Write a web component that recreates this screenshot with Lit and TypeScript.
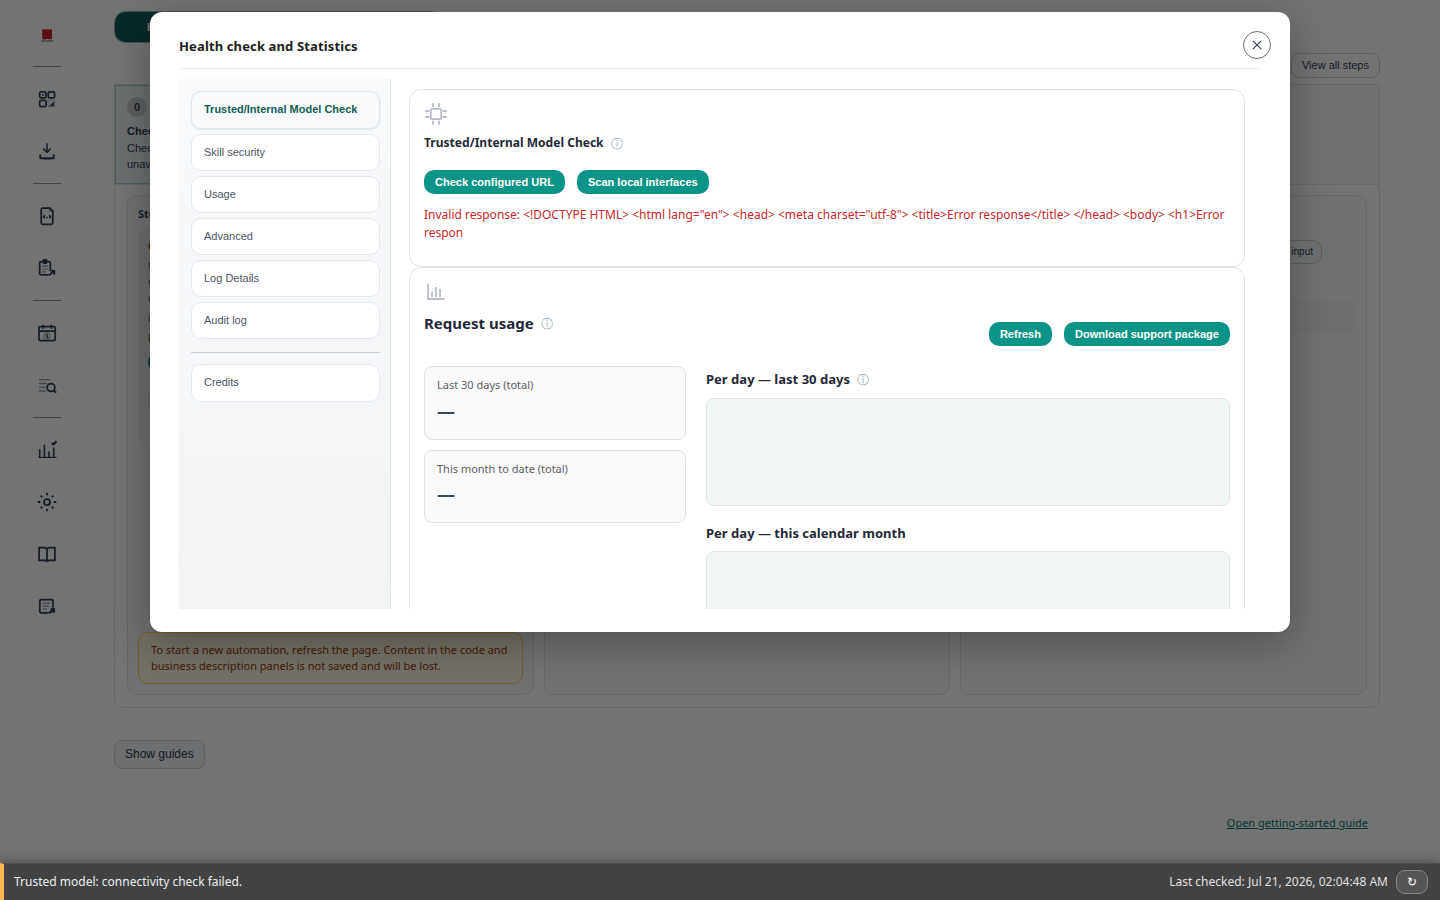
import { LitElement, html, css, svg } from "lit";
import { customElement } from "lit/decorators.js";
import { classMap } from "lit/directives/class-map.js";

const ico = (body: unknown) => html`<svg class="ico" viewBox="0 0 24 24" width="24" height="24">${body}</svg>`;

const icons = {
  logo: svg`<path d="M6 19h12" stroke="#a3a8ae" stroke-width="1.600"/><path d="M7.200 7.400h9.800v9.600H7.200z" fill="#c8242a" stroke="none"/><path d="M8.200 17.900h2.200m3.200 0h2.200" stroke="#6f757c" stroke-width="1"/>`,
  grid: svg`<rect x="4.700" y="4.800" width="6.300" height="6" rx="1.300"/><rect x="13.300" y="4.800" width="6.300" height="6" rx="1.300"/><rect x="4.700" y="13.300" width="6.300" height="6.200" rx="1.300"/><path d="M7.900 7v1.800" stroke-width="1.800"/><path d="M13 19.600V13.200h6.600v6.400z" opacity=".3" stroke-width="1"/><path d="M19 14.600v4.600h-5z" fill="currentColor" stroke="none"/>`,
  download: svg`<path d="M12 4.200v9.200M8.200 9.600l3.800 3.900 3.800-3.900" stroke-width="1.500"/><path d="M5.300 15.600v3.600h13.400v-3.600" stroke-width="1.900"/><path d="M9 20.600h6" opacity=".5" stroke-width="1"/>`,
  code: svg`<path d="M7.300 4h7.400l3.100 3v11.800a1.600 1.600 0 0 1-1.600 1.600H7.800a1.600 1.600 0 0 1-1.600-1.600V5.600A1.500 1.500 0 0 1 7.300 4z"/><path d="M14.400 4v3.200h3.200" opacity=".5" stroke-width="1.200"/><path d="M9.800 11.200 8.400 12.700l1.400 1.400M14.200 11.200l1.400 1.500-1.400 1.400M11.200 13.500h1.600" stroke-width="1.600"/>`,
  clip: svg`<path d="M13.500 18.900H6.200a1.500 1.500 0 0 1-1.500-1.500V7a1.500 1.500 0 0 1 1.500-1.500h7.600A1.500 1.500 0 0 1 15.300 7v8"/><circle cx="9.900" cy="5.400" r="1.700" stroke-width="2"/><path d="M7 10.200h6M7 13h6M7 15.800h3.800" opacity=".55" stroke-width="1.200"/><path d="M14 19.400l5-4.600M15.800 14.800h3.500v4" stroke-width="1.900"/>`,
  calendar: svg`<rect x="4" y="5.500" width="16.200" height="14.200" rx="1.400"/><path d="M4 10h16.200M7.900 3.700v4M16.300 3.700v4"/><circle cx="12" cy="14.800" r="3" opacity=".4" stroke-width="1.200"/><path d="M12 12.900v2.400l1.300 1.600" stroke-width="1.300"/>`,
  search: svg`<path d="M4 6.600h11.300M4 10.500h8M4 14.300h6.500M4 18h7.400" opacity=".5" stroke-width="1.300"/><circle cx="16" cy="14.500" r="3.900"/><path d="M18.800 17.300l2.300 2.300" stroke-width="2"/>`,
  stats: svg`<path d="M3.400 19.400h18" stroke-width="1.200"/><path d="M4.700 19V11M9.400 19V6.800M14 19v-5.600M18.700 19V9.400" stroke-width="1.600"/><path d="M16.700 5l1.800 1.400 3-3.200" stroke-width="2.200"/>`,
  gear: svg`<circle cx="12" cy="12" r="3"/><path d="M12 2.700v2.600M12 18.700v2.600M2.700 12h2.600M18.700 12h2.600M5.700 5.700l1.600 1.600M16.700 16.700l1.600 1.600M5.700 18.300l1.600-1.600M16.700 7.300l1.600-1.600" stroke-width="1.800"/>`,
  book: svg`<path d="M12 7.200C11.500 6.200 10.500 5.700 9.200 5.700H4.100v12.700h5.300c1.300 0 2.100.3 2.600 1 .5-.7 1.300-1 2.600-1h5.300V5.700h-5.100c-1.300 0-2.300.5-2.800 1.500zM12 7.200v12"/>`,
  doc: svg`<path d="M13.800 18.900H6.300a1.500 1.500 0 0 1-1.500-1.500V7a1.500 1.500 0 0 1 1.500-1.500h10.200A1.500 1.500 0 0 1 18 7v6.500"/><path d="M7.800 9.200h7.200M7.800 12.200h6.200M7.800 15.200h4" opacity=".55" stroke-width="1.200"/><path d="M14.300 19.200l4-3.700M15.600 14.900h3.300v3.800" stroke-width="2.400"/>`,
};

@customElement("side-rail")
export class SideRail extends LitElement {
  static styles = css`
    :host { display: flex; flex-direction: column; align-items: center; width: 94px; flex: none; padding-top: 8px; box-sizing: border-box; color: #334155; }
    .item { height: 52px; width: 52px; display: grid; place-items: center; }
    .rule { width: 28px; height: 1px; margin: 6px 0; background: #94989c; }
    .ico { fill: none; stroke: currentColor; stroke-width: 1.75; stroke-linejoin: round; display: block; }
  `;
  render() {
    const groups = [["logo"], ["grid", "download"], ["code", "clip"], ["calendar", "search"], ["stats", "gear", "book", "doc"]];
    return groups.map(
      (g, i) => html`${i ? html`<div class="rule"></div>` : ""}${g.map((n) => html`<div class="item">${ico(icons[n as keyof typeof icons])}</div>`)}`
    );
  }
}

@customElement("work-page")
export class WorkPage extends LitElement {
  static styles = css`
    :host { display: flex; flex-direction: column; flex: 1; min-width: 0; box-sizing: border-box; padding: 11px 60px 0 20px; color: #334155; font: 11px/16px "Liberation Sans", sans-serif; }
    * { box-sizing: border-box; }
    .tabs { width: 328px; height: 32px; border: 1px solid #a9aeb3; border-radius: 11px; flex: none; }
    .tab { width: 162px; height: 30px; border-radius: 10px; background: #115e59; color: #fff; font-weight: 700; padding: 7px 0 0 32px; }
    .tools { display: flex; justify-content: flex-end; margin-top: 10px; }
    .btn { height: 25px; border: 1px solid #cfd3d6; border-radius: 8px; padding: 3px 10px; white-space: nowrap; }
    .board { margin-top: 6px; height: 624px; flex: none; display: flex; flex-direction: column; border: 1px solid #e2e4e5; border-radius: 0 0 10px 10px; }
    .steps { display: flex; height: 100px; flex: none; background: #f8fbfa; border-bottom: 1px solid #e2e8e5; }
    .step { width: 210px; height: 99px; border: 1px solid #a7d3cd; background: #edf6f5; padding: 11px; }
    .num { width: 20px; height: 20px; border-radius: 50%; background: #cdd0d2; font-weight: 700; text-align: center; line-height: 21px; margin-bottom: 6px; }
    .b { font-weight: 700; margin-bottom: 1px; }
    .cols { flex: 1; display: grid; grid-template-columns: repeat(3, 1fr); gap: 10px; padding: 10px 12px 12px; min-height: 0; }
    .col { border: 1px solid #e0e4e6; border-radius: 10px; background: #f8fbfa; padding: 10px; display: flex; flex-direction: column; justify-content: space-between; }
    .first { background: #f6f8fb; }
    .head { font: 700 11px/16px "Noto Sans", sans-serif; margin-bottom: 8px; }
    .block { height: 218px; border-radius: 8px; background: #eef0f2; padding: 8px 10px; font: 11px/16px "Noto Sans", sans-serif; color: #7c4a1e; }
    .line { height: 17px; }
    .gap { margin-bottom: 3px; }
    .pill { height: 24px; border-radius: 10px; width: 120px; border: 1px solid #cbd5e1; margin-top: 16px; }
    .solid { background: #0f766e; border: 0; height: 20px; margin-top: 5px; }
    .warn { border: 1px solid #fcd34d; border-radius: 10px; background: linear-gradient(#fff7e0, #fff9ea); color: #92400e; height: 52px; padding: 9px 12px; font: 11px/16px "Noto Sans", sans-serif; white-space: nowrap; }
    .last { justify-content: flex-start; align-items: flex-end; }
    .tag { height: 24px; margin: 34px 34px 0 0; border: 1px solid #cbd0d3; border-radius: 10px; padding: 3px 8px; font-size: 10px; white-space: nowrap; }
    .bar { height: 32px; width: 100%; border-radius: 8px; background: #f1f3f2; margin-top: 38px; }
    .guides { align-self: flex-start; margin-top: 32px; height: 29px; border: 1px solid #cbd5e1; border-radius: 8px; background: #f3f6fa; font-size: 12px; padding: 5px 10px; }
    .link { align-self: flex-end; margin: 46px 12px 0 0; font: 11px/16px "Noto Sans", sans-serif; color: #0f766e; text-decoration: underline; }
  `;
  render() {
    return html`
      <div class="tabs"><div class="tab">Build</div></div>
      <div class="tools"><div class="btn">View all steps</div></div>
      <div class="board">
        <div class="steps">
          <div class="step"><div class="num">0</div><div class="b">Check</div><div>Check</div><div>unavailable</div></div>
        </div>
        <div class="cols">
          <div class="col first">
            <div>
              <div class="head">Step</div>
              <div class="block">
                <div class="line b">O</div><div class="line">c</div><div class="line">c</div><div class="line gap">o</div><div class="line gap">c</div><div class="line">b</div>
                <div class="pill solid"></div><div class="pill"></div>
              </div>
            </div>
            <div class="warn">To start a new automation, refresh the page. Content in the code and<br />business description panels is not saved and will be lost.</div>
          </div>
          <div class="col"></div>
          <div class="col last"><div class="tag">input</div><div class="bar"></div></div>
        </div>
      </div>
      <div class="guides">Show guides</div>
      <div class="link">Open getting-started guide</div>
    `;
  }
}

@customElement("health-dialog")
export class HealthDialog extends LitElement {
  static styles = css`
    :host { display: flex; flex-direction: column; width: 1140px; height: 620px; box-sizing: border-box; padding: 0 29px 23px; border-radius: 12px; background: #fff; box-shadow: 0 10px 40px rgba(0, 0, 0, 0.3); font-family: "Noto Sans", sans-serif; color: #1f2937; }
    * { box-sizing: border-box; }
    .header { height: 57px; flex: none; border-bottom: 1px solid #e5e7eb; display: flex; align-items: center; justify-content: space-between; padding-top: 12px; }
    .title { font-weight: 700; font-size: 13px; line-height: 20px; letter-spacing: 0.13px; color: #212121; }
    .close { width: 28px; height: 28px; border: 1px solid #6b7280; border-radius: 50%; margin: 0 -10px 2px 0; display: grid; place-items: center; }
    .close svg { stroke: #374151; stroke-width: 1.2; fill: none; display: block; }
    .body { display: flex; flex: 1; min-height: 0; margin-top: 10px; overflow: hidden; }
    .nav { width: 212px; flex: none; padding: 12px 10px 0 12px; border-right: 1px solid #dfe7e1; background: linear-gradient(#f8fafc, #f1f3f5); display: flex; flex-direction: column; gap: 5px; font: 11px/17px "Liberation Sans", sans-serif; color: #4b5563; }
    .entry { height: 37px; flex: none; border: 1px solid #e5e9ef; border-radius: 10px; background: #fff; padding: 9px 12px; }
    .active { height: 38px; background: #f8fafc; color: #115e59; font-weight: 700; border-color: #e0e5ea; box-shadow: 0 1px 2px rgba(15, 118, 110, 0.12); }
    .rule { height: 1px; flex: none; background: #cbd0d8; margin: 8px 0 6px; }
    .credits { height: 38px; }
    .main { flex: 1; padding: 10px 16px 0 18px; display: flex; flex-direction: column; }
    .card { border: 1px solid #dfe4df; border-radius: 12px; padding: 12px 14px 0; flex: none; }
    .one { height: 178px; }
    .two { height: 500px; }
    .glyph { display: block; fill: none; stroke: #b9bdc7; stroke-width: 1.8; }
    .h { display: flex; align-items: center; gap: 7px; font-weight: 700; white-space: nowrap; }
    .h12 { font-size: 12.050px; line-height: 18px; margin-top: 8px; }
    .h15 { font-size: 15px; line-height: 22px; margin-top: 8px; }
    .h13 { font-size: 13.040px; line-height: 20px; }
    .i { font-size: 12px; font-weight: 400; color: #90a4ae; line-height: 14px; padding-top: 1px; }
    .row { display: flex; gap: 12px; }
    .end { justify-content: flex-end; margin-top: -12px; }
    .act { height: 24px; border-radius: 10px; background: #0d9488; color: #fff; font: 700 11.040px/24px "Liberation Sans", sans-serif; padding: 0 11px; white-space: nowrap; }
    .actions { margin-top: 18px; }
    .err { color: #c62828; font-size: 12px; line-height: 18px; margin-top: 12px; }
    .split { display: grid; grid-template-columns: 262px 1fr; gap: 20px; margin-top: 20px; }
    .stat { border: 1px solid #dfe1e3; border-radius: 8px; background: #fafafa; padding: 10px 12px; height: 74px; margin-bottom: 10px; font-size: 11px; line-height: 16px; color: #5b6064; }
    .short { height: 73px; }
    .val { font-size: 18px; line-height: 24px; font-weight: 700; color: #37474f; margin-top: 6px; }
    .short .val { margin-top: 5px; }
    .charts { padding-top: 3px; }
    .chart { height: 108px; border: 1px solid #e2e7ea; border-radius: 8px; background: #f0f6f2; margin: 9px 0 17px; }
    .chart.second { margin-top: 8px; }
  `;
  render() {
    const entries = ["Trusted/Internal Model Check", "Skill security", "Usage", "Advanced", "Log Details", "Audit log"];
    const info = html`<span class="i">ⓘ</span>`;
    return html`
      <div class="header">
        <div class="title">Health check and Statistics</div>
        <div class="close"><svg width="10" height="10" viewBox="0 0 10 10"><path d="M.8.8l8.400 8.400M9.200.8L.8 9.200" /></svg></div>
      </div>
      <div class="body">
        <div class="nav">
          ${entries.map((t, i) => html`<div class=${classMap({ entry: true, active: i === 0 })}>${t}</div>`)}
          <div class="rule"></div>
          <div class="entry credits">Credits</div>
        </div>
        <div class="main">
          <div class="card one">
            <svg class="glyph" width="24" height="24" viewBox="0 0 24 24"><rect x="6.800" y="6.800" width="10.400" height="10.400" rx="1.400" /><path d="M9 1.300v4M15 1.300v4M9 18.700v4M15 18.700v4M1.300 9h4M1.300 15h4M18.700 9h4M18.700 15h4" /></svg>
            <div class="h h12"><span>Trusted/Internal Model Check</span>${info}</div>
            <div class="row actions"><div class="act">Check configured URL</div><div class="act">Scan local interfaces</div></div>
            <div class="err">Invalid response: &lt;!DOCTYPE HTML&gt; &lt;html lang="en"&gt; &lt;head&gt; &lt;meta charset="utf-8"&gt; &lt;title&gt;Error response&lt;/title&gt; &lt;/head&gt; &lt;body&gt; &lt;h1&gt;Error respon</div>
          </div>
          <div class="card two">
            <svg class="glyph" width="24" height="24" viewBox="0 0 24 24"><path d="M4 4v15h16.500M8 17v-5.500M12 17V7M16 17V9" /></svg>
            <div class="h h15"><span>Request usage</span>${info}</div>
            <div class="row end"><div class="act">Refresh</div><div class="act">Download support package</div></div>
            <div class="split">
              <div>
                <div class="stat">Last 30 days (total)<div class="val">—</div></div>
                <div class="stat short">This month to date (total)<div class="val">—</div></div>
              </div>
              <div class="charts">
                <div class="h h13"><span>Per day — last 30 days</span>${info}</div>
                <div class="chart"></div>
                <div class="h h13"><span>Per day — this calendar month</span></div>
                <div class="chart second"></div>
              </div>
            </div>
          </div>
        </div>
      </div>
    `;
  }
}

@customElement("app-root")
export class AppRoot extends LitElement {
  static styles = css`
    :host { display: block; position: relative; width: 1440px; height: 900px; overflow: hidden; background: #fff; }
    .page { display: flex; height: 900px; }
    .overlay { position: absolute; inset: 0; background: rgba(0, 0, 0, 0.55); display: flex; justify-content: center; align-items: flex-start; padding-top: 12px; }
    .status { position: absolute; left: 0; right: 0; bottom: 0; height: 37px; box-sizing: border-box; display: flex; align-items: center; justify-content: space-between; background: #424242; border-left: 4px solid #ffb74d; border-top: 1px solid #4e4e4e; padding: 0 12px 0 10px; box-shadow: 0 -2px 12px rgba(0, 0, 0, 0.3); color: #eceff1; font: 12px/18px "Noto Sans", sans-serif; }
    .right { display: flex; align-items: center; gap: 8px; color: #e0e0e0; }
    .again { width: 32px; height: 24px; box-sizing: border-box; border: 1px solid #858585; border-radius: 9px; background: #555; color: #fff; text-align: center; font-size: 12px; line-height: 22px; }
  `;
  render() {
    return html`
      <div class="page"><side-rail></side-rail><work-page></work-page></div>
      <div class="overlay"><health-dialog></health-dialog></div>
      <div class="status">
        <span>Trusted model: connectivity check failed.</span>
        <span class="right"><span>Last checked: Jul 21, 2026, 02:04:48 AM</span><span class="again">↻</span></span>
      </div>
    `;
  }
}
